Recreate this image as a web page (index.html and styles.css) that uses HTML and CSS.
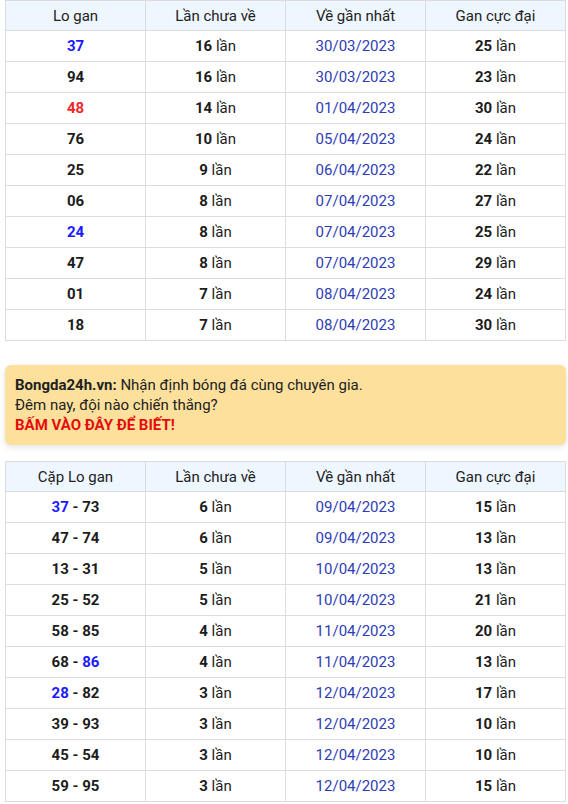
FILE: index.html
```html
<!DOCTYPE html>
<html lang="vi">
<head>
<meta charset="utf-8">
<link rel="stylesheet" href="styles.css">
</head>
<body>
<table class="tbl">
  <thead>
    <tr><th>Lo gan</th><th>Lần chưa về</th><th>Về gần nhất</th><th>Gan cực đại</th></tr>
  </thead>
  <tbody>
    <tr><td><b class="blue">37</b></td><td><b>16</b> lần</td><td class="date">30/03/2023</td><td><b>25</b> lần</td></tr>
    <tr><td><b>94</b></td><td><b>16</b> lần</td><td class="date">30/03/2023</td><td><b>23</b> lần</td></tr>
    <tr><td><b class="red">48</b></td><td><b>14</b> lần</td><td class="date">01/04/2023</td><td><b>30</b> lần</td></tr>
    <tr><td><b>76</b></td><td><b>10</b> lần</td><td class="date">05/04/2023</td><td><b>24</b> lần</td></tr>
    <tr><td><b>25</b></td><td><b>9</b> lần</td><td class="date">06/04/2023</td><td><b>22</b> lần</td></tr>
    <tr><td><b>06</b></td><td><b>8</b> lần</td><td class="date">07/04/2023</td><td><b>27</b> lần</td></tr>
    <tr><td><b class="blue">24</b></td><td><b>8</b> lần</td><td class="date">07/04/2023</td><td><b>25</b> lần</td></tr>
    <tr><td><b>47</b></td><td><b>8</b> lần</td><td class="date">07/04/2023</td><td><b>29</b> lần</td></tr>
    <tr><td><b>01</b></td><td><b>7</b> lần</td><td class="date">08/04/2023</td><td><b>24</b> lần</td></tr>
    <tr><td><b>18</b></td><td><b>7</b> lần</td><td class="date">08/04/2023</td><td><b>30</b> lần</td></tr>
  </tbody>
</table>

<div class="banner">
  <div><b>Bongda24h.vn:</b> Nhận định bóng đá cùng chuyên gia.</div>
  <div>Đêm nay, đội nào chiến thắng?</div>
  <div class="cta">BẤM VÀO ĐÂY ĐỂ BIẾT!</div>
</div>

<table class="tbl">
  <thead>
    <tr><th>Cặp Lo gan</th><th>Lần chưa về</th><th>Về gần nhất</th><th>Gan cực đại</th></tr>
  </thead>
  <tbody>
    <tr><td><b><span class="blue">37</span> - 73</b></td><td><b>6</b> lần</td><td class="date">09/04/2023</td><td><b>15</b> lần</td></tr>
    <tr><td><b>47 - 74</b></td><td><b>6</b> lần</td><td class="date">09/04/2023</td><td><b>13</b> lần</td></tr>
    <tr><td><b>13 - 31</b></td><td><b>5</b> lần</td><td class="date">10/04/2023</td><td><b>13</b> lần</td></tr>
    <tr><td><b>25 - 52</b></td><td><b>5</b> lần</td><td class="date">10/04/2023</td><td><b>21</b> lần</td></tr>
    <tr><td><b>58 - 85</b></td><td><b>4</b> lần</td><td class="date">11/04/2023</td><td><b>20</b> lần</td></tr>
    <tr><td><b>68 - <span class="blue">86</span></b></td><td><b>4</b> lần</td><td class="date">11/04/2023</td><td><b>13</b> lần</td></tr>
    <tr><td><b><span class="blue">28</span> - 82</b></td><td><b>3</b> lần</td><td class="date">12/04/2023</td><td><b>17</b> lần</td></tr>
    <tr><td><b>39 - 93</b></td><td><b>3</b> lần</td><td class="date">12/04/2023</td><td><b>10</b> lần</td></tr>
    <tr><td><b>45 - 54</b></td><td><b>3</b> lần</td><td class="date">12/04/2023</td><td><b>10</b> lần</td></tr>
    <tr><td><b>59 - 95</b></td><td><b>3</b> lần</td><td class="date">12/04/2023</td><td><b>15</b> lần</td></tr>
  </tbody>
</table>
</body>
</html>
```

FILE: styles.css
```css
html, body {
  margin: 0;
  padding: 0;
  background: #fff;
}
body {
  font-family: Roboto, "Liberation Sans", Arial, sans-serif;
  font-size: 15px;
  color: #1c1c1c;
  padding: 0 2px 0 5px;
}
.tbl {
  width: 561px;
  border-collapse: collapse;
  table-layout: fixed;
}
.tbl th, .tbl td {
  border: 1px solid #dcdcdc;
  text-align: center;
  padding: 0;
}
.tbl th {
  height: 29px;
  background: #eef6ff;
  font-weight: 400;
  color: #222;
}
.tbl td {
  height: 30px;
}
.tbl b {
  font-weight: 700;
}
.blue { color: #1a1aff; }
.red { color: #f2262a; }
.date { color: #2e3db5; }
.banner {
  width: 561px;
  box-sizing: border-box;
  margin: 24px 0 16px;
  padding: 10px 10px;
  background: #fce09c;
  border-radius: 6px;
  box-shadow: 0 2px 6px rgba(0,0,0,0.12);
  line-height: 20px;
  font-size: 15px;
  color: #222;
}
.banner .cta {
  color: #e60c0c;
  font-weight: 700;
}
```
